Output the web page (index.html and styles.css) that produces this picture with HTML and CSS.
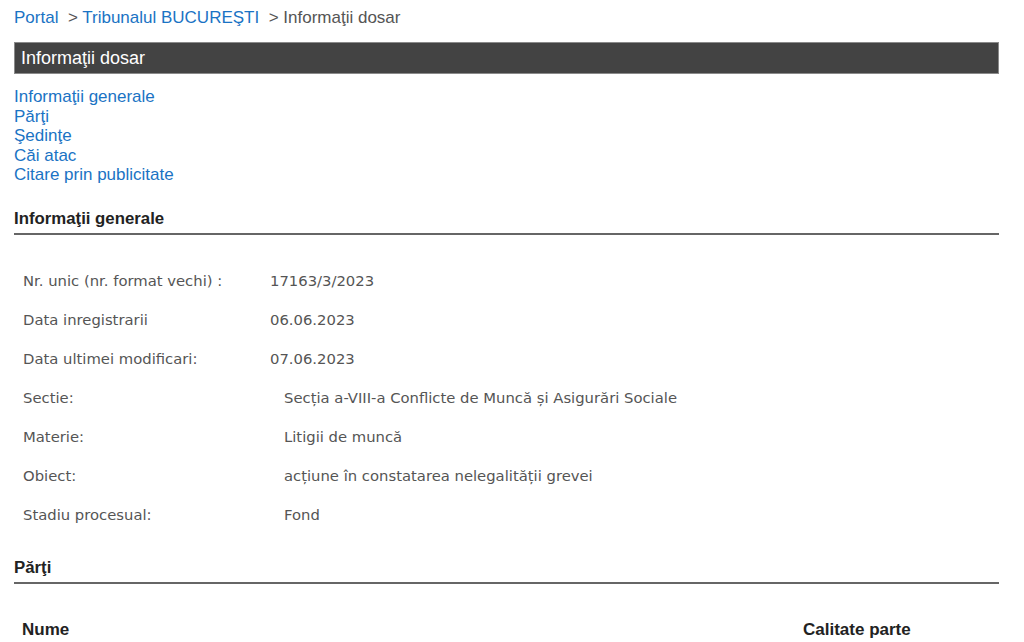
FILE: index.html
```html
<!DOCTYPE html>
<html lang="ro">
<head>
<meta charset="utf-8">
<link rel="stylesheet" href="styles.css">
</head>
<body>
<div class="page">
  <nav class="crumbs"><a href="#">Portal</a>&nbsp; <span class="sep">&gt;</span> <a href="#">Tribunalul BUCUREŞTI</a>&nbsp; <span class="sep">&gt; Informaţii dosar</span></nav>
  <div class="titlebar">Informaţii dosar</div>
  <ul class="toc">
    <li><a href="#">Informaţii generale</a></li>
    <li><a href="#">Părţi</a></li>
    <li><a href="#">Şedinţe</a></li>
    <li><a href="#">Căi atac</a></li>
    <li><a href="#">Citare prin publicitate</a></li>
  </ul>
  <h2 class="section">Informaţii generale</h2>
  <table class="info info-a">
    <tr><td class="lbl">Nr. unic (nr. format vechi) :</td><td>17163/3/2023</td></tr>
    <tr><td class="lbl">Data inregistrarii</td><td>06.06.2023</td></tr>
    <tr><td class="lbl">Data ultimei modificari:</td><td>07.06.2023</td></tr>
  </table>
  <table class="info info-b">
    <tr><td class="lbl">Sectie:</td><td>Secția a-VIII-a Conflicte de Muncă și Asigurări Sociale</td></tr>
    <tr><td class="lbl">Materie:</td><td>Litigii de muncă</td></tr>
    <tr><td class="lbl">Obiect:</td><td>acțiune în constatarea nelegalității grevei</td></tr>
    <tr><td class="lbl">Stadiu procesual:</td><td>Fond</td></tr>
  </table>
  <h2 class="section section-parti">Părţi</h2>
  <div class="parti-head">
    <span>Nume</span>
    <span class="calitate">Calitate parte</span>
  </div>
</div>
</body>
</html>
```
FILE: styles.css
```css
html, body { margin: 0; padding: 0; background: #fff; }
.page {
  padding: 8px 25px 0 14px;
  font-family: "Liberation Sans", Arial, sans-serif;
  font-size: 17px;
  color: #444;
}
a { color: #1a73c4; text-decoration: none; }
.crumbs { line-height: 20px; height: 20px; }
.crumbs .sep { color: #555; }
.titlebar {
  margin-top: 14px;
  height: 30px;
  line-height: 30px;
  background: #434343;
  border: 1px solid #8a8a8a;
  color: #fff;
  font-size: 18px;
  padding-left: 6px;
}
.toc { list-style: none; margin: 13px 0 0 0; padding: 0; line-height: 19.5px; }
.section {
  margin: 24px 0 0 0;
  font-size: 16.8px;
  font-weight: bold;
  color: #222;
  padding-bottom: 5px;
  border-bottom: 2px solid #666;
  line-height: 19px;
}
.info {
  border-collapse: collapse;
  font-family: "DejaVu Sans", Verdana, sans-serif;
  font-size: 14.8px;
  color: #555;
}
.info td { padding: 0; height: 39px; vertical-align: middle; }
.info .lbl { padding-left: 9px; }
.info-a { margin-top: 26px; }
.info-a .lbl { width: 247px; }
.info-b .lbl { width: 261px; }
.section-parti { margin-top: 24px; }
.parti-head {
  display: flex;
  justify-content: space-between;
  margin-top: 36px;
  font-weight: bold;
  color: #222;
  padding-left: 8px;
  font-size: 17px;
}
.calitate { width: 196px; }
```
